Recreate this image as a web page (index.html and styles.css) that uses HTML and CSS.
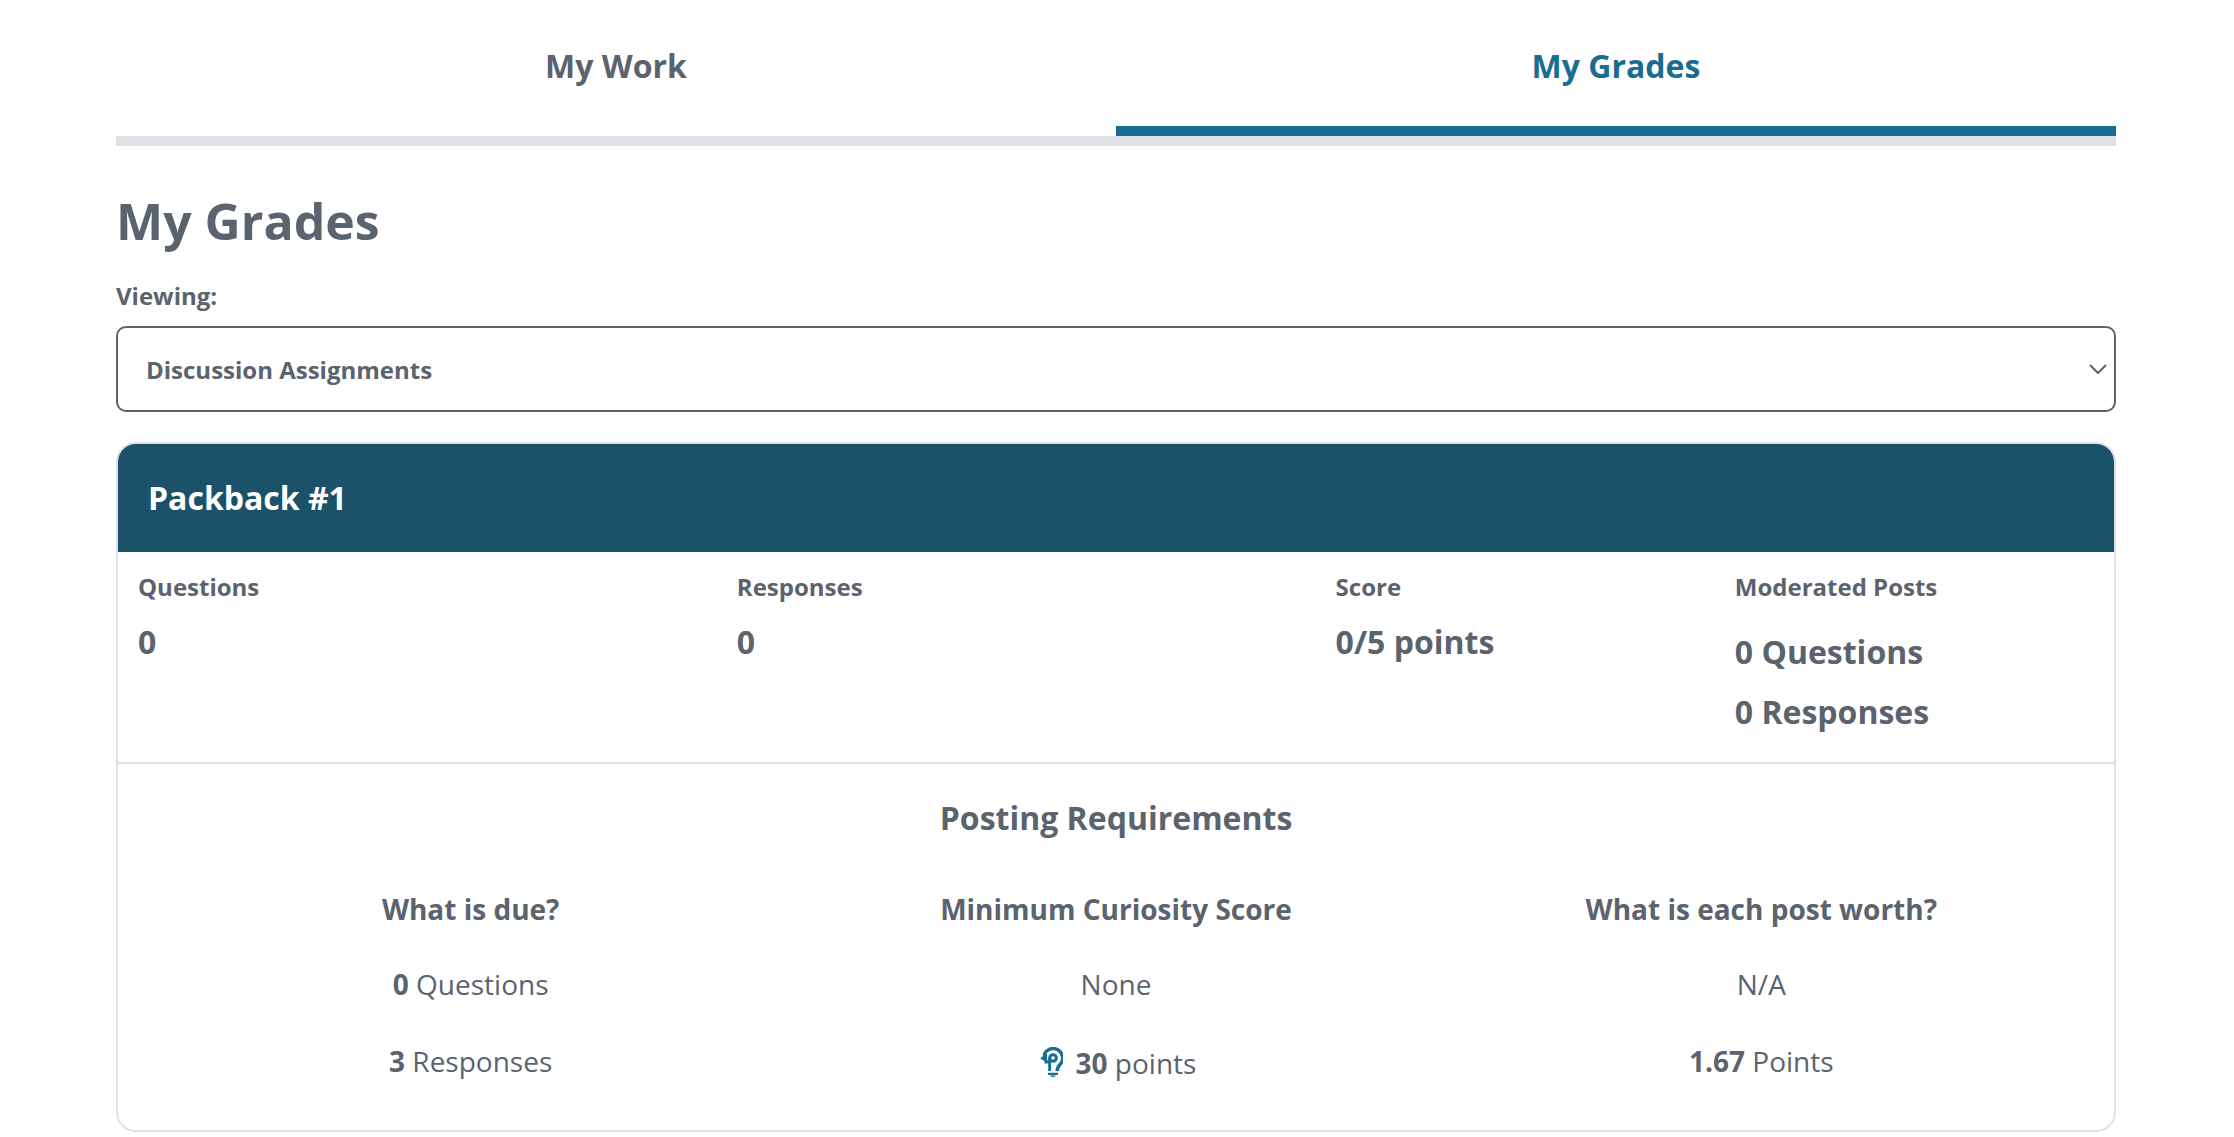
FILE: index.html
```html
<!DOCTYPE html>
<html lang="en">

<head>
    <meta charset="UTF-8">
    <title>My Grades</title>
    <link rel="stylesheet" href="styles.css">
</head>

<body>
    <main class="page">
        <nav class="tabs">
            <a href="#" class="tab">My Work</a>
            <a href="#" class="tab active">My Grades</a>
        </nav>

        <h1 class="page-title">My Grades</h1>

        <label class="viewing-label">Viewing:</label>
        <div class="viewing-select">
            <span>Discussion Assignments</span>
            <svg class="chevron" width="18" height="10" viewBox="0 0 18 10">
                <path d="M1 1l8 8 8-8" fill="none" stroke="#5b636e" stroke-width="2" />
            </svg>
        </div>

        <section class="grade-card">
            <h2 class="card-header">Packback #1</h2>

            <div class="stats">
                <div class="stat">
                    <h3>Questions</h3>
                    <p>0</p>
                </div>
                <div class="stat">
                    <h3>Responses</h3>
                    <p>0</p>
                </div>
                <div class="stat">
                    <h3>Score</h3>
                    <p>0/5 points</p>
                </div>
                <div class="stat moderated">
                    <h3>Moderated Posts</h3>
                    <p>0 Questions</p>
                    <p>0 Responses</p>
                </div>
            </div>

            <div class="requirements">
                <h3 class="requirements-title">Posting Requirements</h3>
                <div class="requirements-grid">
                    <div class="requirement">
                        <h4>What is due?</h4>
                        <p><b>0</b> Questions</p>
                        <p><b>3</b> Responses</p>
                    </div>
                    <div class="requirement">
                        <h4>Minimum Curiosity Score</h4>
                        <p>None</p>
                        <p class="curiosity">
                            <svg class="bulb" width="23" height="30" viewBox="0 0 23 30">
                                <path d="M4.100 8A9.500 9.500 0 1 1 20.800 16.600C19 18.500 17.200 19.800 17.200 24" fill="none" stroke="#1a6d91" stroke-width="3.400" />
                                <path d="M3 7h4v6l2 1v2.500H4.500V14L0.200 11.500 3 9z" fill="#1a6d91" />
                                <circle cx="13" cy="11" r="3.300" fill="none" stroke="#1a6d91" stroke-width="3" />
                                <path d="M8.200 11H11V24H8.200z" fill="#1a6d91" />
                                <path d="M8 25.800h10V28H8zM10 28.400h6L14.500 30h-3z" fill="#1a6d91" />
                            </svg>
                            <span class="curiosity-points"><b>30</b> points</span>
                        </p>
                    </div>
                    <div class="requirement">
                        <h4>What is each post worth?</h4>
                        <p>N/A</p>
                        <p><b>1.67</b> Points</p>
                    </div>
                </div>
            </div>
        </section>
    </main>
</body>

</html>
```

FILE: styles.css
```css
/* Reset styles */

* {
    margin: 0;
    padding: 0;
    box-sizing: border-box;
}

body {
    font-family: "Open Sans", Arial, sans-serif;
    background-color: #fff;
    color: #5b636e;
    overflow: hidden;
}

.page {
    width: 2000px;
    margin-left: 116px;
}
/* Tabs */

.tabs {
    display: flex;
    height: 146px;
    border-bottom: 10px solid #dee2e6;
}

.tab {
    flex: 1;
    height: 136px;
    padding-top: 45px;
    text-align: center;
    text-decoration: none;
    color: #5b636e;
    font-size: 32px;
    line-height: 42px;
    font-weight: 700;
}

.tab.active {
    color: #1a6d91;
    border-bottom: 10px solid #1a6d91;
}
/* Title and select */

.page-title {
    margin-top: 45px;
    font-size: 50px;
    line-height: 60px;
    font-weight: 700;
}

.viewing-label {
    display: block;
    margin-top: 29px;
    font-size: 24px;
    line-height: 32px;
    font-weight: 700;
}

.viewing-select {
    display: flex;
    justify-content: space-between;
    align-items: center;
    height: 86px;
    margin-top: 14px;
    padding: 0 7px 0 28px;
    border: 2px solid #5b636e;
    border-radius: 10px;
    font-size: 24px;
    font-weight: 700;
}
/* Grade card */

.grade-card {
    margin-top: 30px;
    border: 2px solid #dee2e6;
    border-radius: 20px;
    overflow: hidden;
}

.card-header {
    height: 108px;
    padding: 0 30px;
    background-color: #1c5269;
    color: #fff;
    font-size: 32px;
    line-height: 108px;
    font-weight: 700;
}

.stats {
    display: grid;
    grid-template-columns: 3fr 3fr 2fr 2fr;
    height: 212px;
    padding-top: 19px;
    border-bottom: 2px solid #dee2e6;
}

.stat {
    padding-left: 20px;
}

.stat h3 {
    font-size: 24px;
    line-height: 32px;
    font-weight: 700;
}

.stat p {
    margin-top: 18px;
    font-size: 32px;
    line-height: 42px;
    font-weight: 700;
}

.moderated p {
    margin-top: 18px;
}

.moderated h3 + p {
    margin-top: 28px;
}
/* Posting requirements */

.requirements {
    padding: 33px 30px 0;
    height: 366px;
    text-align: center;
}

.requirements-title {
    font-size: 32px;
    line-height: 42px;
    font-weight: 700;
}

.requirements-grid {
    display: grid;
    grid-template-columns: repeat(3, 1fr);
    margin-top: 52px;
}

.requirement h4 {
    font-size: 28px;
    line-height: 36px;
    font-weight: 700;
}

.requirement p {
    margin-top: 41px;
    font-size: 28px;
    line-height: 36px;
}

.requirement h4 + p {
    margin-top: 39px;
}

.requirement b {
    font-weight: 700;
}

.curiosity {
    display: flex;
    justify-content: center;
    align-items: center;
    gap: 13px;
    padding-left: 4px;
}

.curiosity-points {
    margin-top: 2px;
}
```
